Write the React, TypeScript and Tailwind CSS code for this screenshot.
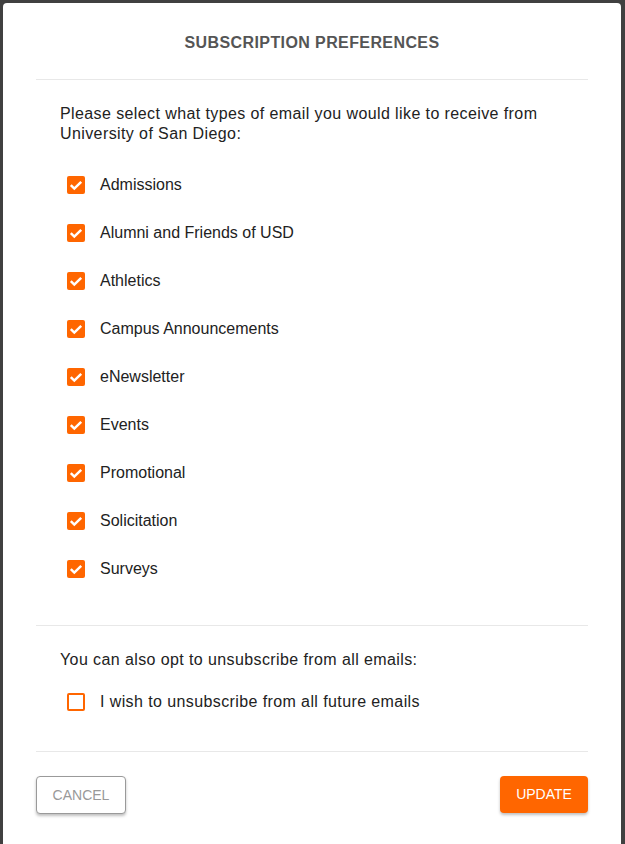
import { useState } from 'react';

const topics = [
  'Admissions',
  'Alumni and Friends of USD',
  'Athletics',
  'Campus Announcements',
  'eNewsletter',
  'Events',
  'Promotional',
  'Solicitation',
  'Surveys',
];

function Box({ checked }: { checked: boolean }) {
  if (!checked) {
    return <span className="block w-[18px] h-[18px] rounded-[2px] border-[2.5px] border-[#ff6600] bg-white" />;
  }
  return (
    <span className="flex items-center justify-center w-[18px] h-[18px] rounded-[2px] bg-[#ff6600]">
      <svg viewBox="0 0 18 18" className="w-[18px] h-[18px]">
        <polyline points="3.8,9.2 7.3,12.6 14.2,5.8" fill="none" stroke="#fff" strokeWidth="2.5" />
      </svg>
    </span>
  );
}

function Row({
  label,
  checked,
  onToggle,
  spaced,
}: {
  label: string;
  checked: boolean;
  onToggle: () => void;
  spaced?: boolean;
}) {
  return (
    <label className="flex items-center h-[48px] cursor-pointer" onClick={onToggle}>
      <span className="pl-[7px] pr-[15px]">
        <Box checked={checked} />
      </span>
      <span className={spaced ? 'text-[16px] text-[#222] tracking-[0.4px]' : 'text-[16px] text-[#222]'}>{label}</span>
    </label>
  );
}

export default function App() {
  const [picked, setPicked] = useState<boolean[]>(topics.map(() => true));
  const [optOut, setOptOut] = useState(false);

  return (
    <div
      className="w-[625px] h-[844px] bg-[#404040] pt-[3px] pl-[3px] pr-[4px] overflow-hidden"
      style={{ fontFamily: '"Liberation Sans", Arial, sans-serif' }}
    >
      <div className="bg-white h-[850px] rounded-t-[4px] px-[33px]">
        {/* Title */}
        <h1 className="pt-[30px] pb-[26px] text-center text-[16px] leading-[20px] font-bold tracking-[0.4px] text-[#555]">
          SUBSCRIPTION PREFERENCES
        </h1>
        <div className="h-px bg-[#e8e8e8]" />

        <div className="px-[24px]">
          <p className="mt-[24px] text-[16px] leading-[20px] tracking-[0.4px] text-[#222]">
            Please select what types of email you would like to receive from University of San Diego:
          </p>
          <div className="mt-[17px] mb-[32px]">
            {topics.map((t, i) => (
              <Row
                key={t}
                label={t}
                checked={picked[i]}
                onToggle={() => setPicked(picked.map((v, j) => (j === i ? !v : v)))}
              />
            ))}
          </div>
        </div>
        <div className="h-px bg-[#e8e8e8]" />

        <div className="px-[24px]">
          <p className="mt-[24px] text-[16px] leading-[20px] tracking-[0.4px] text-[#222]">
            You can also opt to unsubscribe from all emails:
          </p>
          <div className="mt-[8px] mb-[25px]">
            <Row
              label="I wish to unsubscribe from all future emails"
              checked={optOut}
              onToggle={() => setOptOut(!optOut)}
              spaced
            />
          </div>
        </div>
        <div className="h-px bg-[#e8e8e8]" />

        {/* Actions */}
        <div className="flex justify-between items-start mt-[24px]">
          <button className="w-[90px] h-[38px] rounded-[4px] border border-[#9a9a9a] bg-white text-[14px] text-[#999] shadow-[0_2px_3px_rgba(0,0,0,0.25)]">
            CANCEL
          </button>
          <button className="w-[88px] h-[37px] rounded-[4px] bg-[#ff6600] text-[14px] text-white shadow-[0_2px_3px_rgba(0,0,0,0.25)]">
            UPDATE
          </button>
        </div>
      </div>
    </div>
  );
}
